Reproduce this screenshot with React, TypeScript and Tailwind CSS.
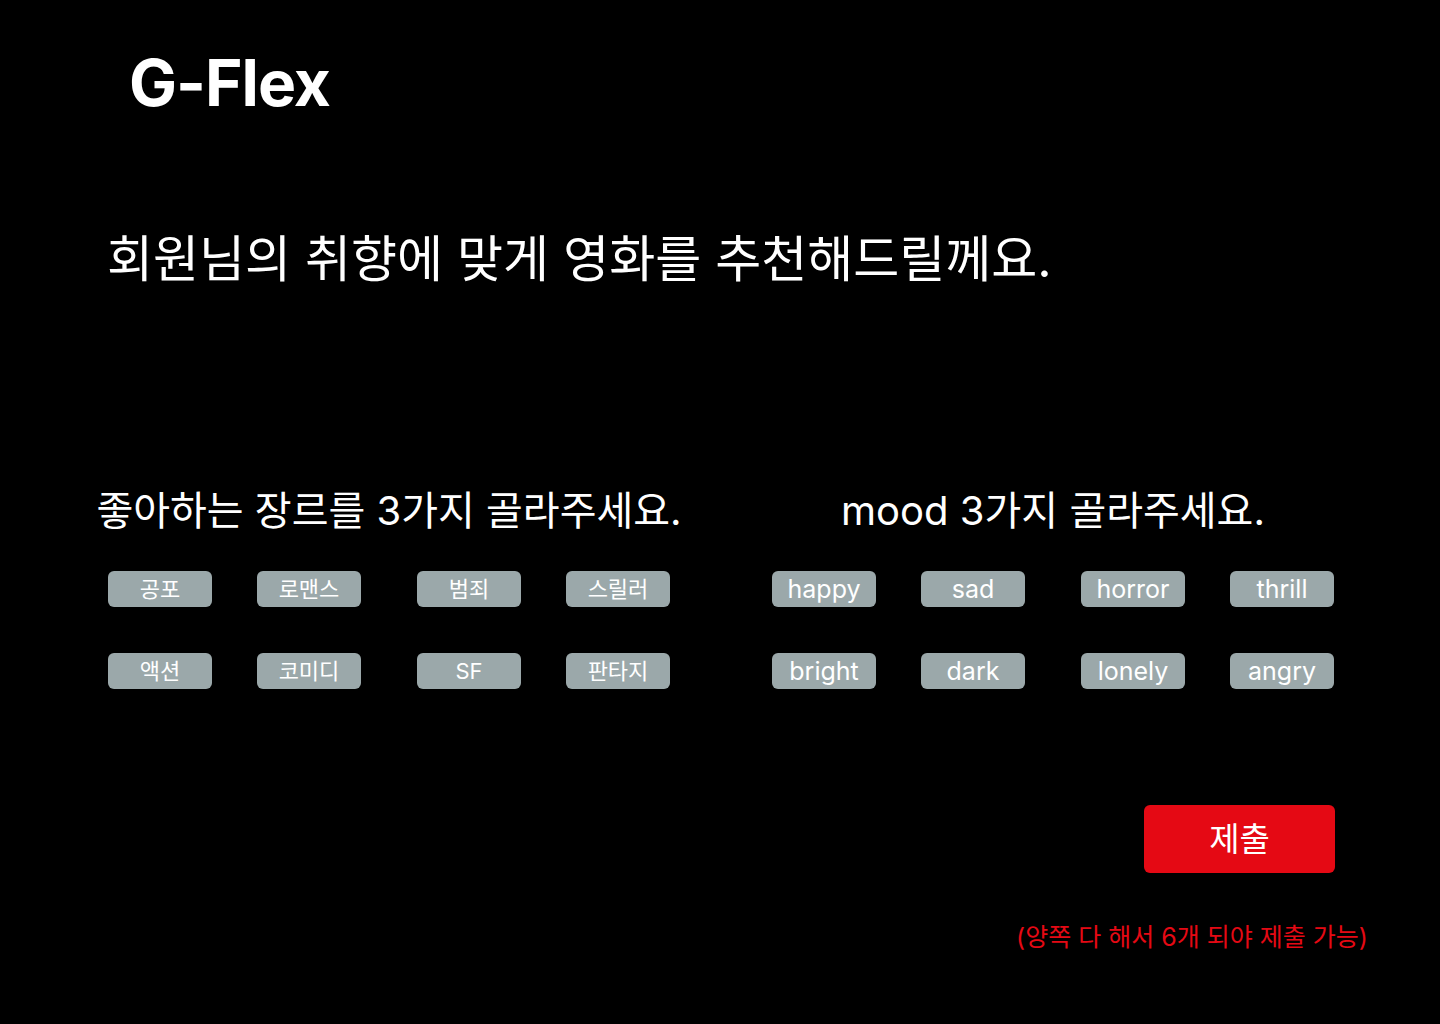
const GENRES = ["공포", "로맨스", "범죄", "스릴러", "액션", "코미디", "SF", "판타지"];
const MOODS = ["happy", "sad", "horror", "thrill", "bright", "dark", "lonely", "angry"];

function Chip({ label, korean }: { label: string; korean?: boolean }) {
  return (
    <button
      type="button"
      className={
        korean
          ? "flex h-[36px] w-[104px] items-center justify-center rounded-[6px] bg-[#9ba8aa] text-[22px] leading-none text-white"
          : "flex h-[36px] w-[104px] items-center justify-center rounded-[6px] bg-[#9ba8aa] text-[25px] leading-none text-white"
      }
    >
      {label}
    </button>
  );
}

function ChoiceGroup({
  title,
  items,
  korean,
}: {
  title: string;
  items: string[];
  korean?: boolean;
}) {
  return (
    <div className="flex w-[600px] flex-col items-center">
      <h2 className="text-[40px] leading-none text-white">{title}</h2>
      <div className="mt-[40px] grid grid-cols-[149px_160px_149px_104px] gap-y-[46px]">
        {items.map((item) => (
          <Chip key={item} label={item} korean={korean} />
        ))}
      </div>
    </div>
  );
}

export default function App() {
  return (
    <div className="min-h-[1024px] w-full bg-black font-['Inter','Noto_Sans_CJK_KR',sans-serif]">
      <header className="pl-[129px] pt-[51px]">
        <h1 className="text-[64px] font-bold leading-none tracking-[-1px] text-white">G-Flex</h1>
      </header>

      <p className="mt-[119px] pl-[107px] text-[50px] leading-none text-white">
        회원님의 취향에 맞게 영화를 추천해드릴께요.
      </p>

      <section className="mt-[207px] flex gap-[64px] pl-[89px]">
        <ChoiceGroup title="좋아하는 장르를 3가지 골라주세요." items={GENRES} korean />
        <ChoiceGroup title="mood 3가지 골라주세요." items={MOODS} />
      </section>

      <div className="flex flex-col items-end pr-[72px]">
        <button
          type="button"
          className="mr-[33px] mt-[116px] flex h-[68px] w-[191px] items-center justify-center rounded-[6px] bg-[#e50914] text-[33px] leading-none text-white"
        >
          제출
        </button>
        <p className="mt-[52px] text-[25px] leading-none text-[#e50914]">
          (양쪽 다 해서 6개 되야 제출 가능)
        </p>
      </div>
    </div>
  );
}
